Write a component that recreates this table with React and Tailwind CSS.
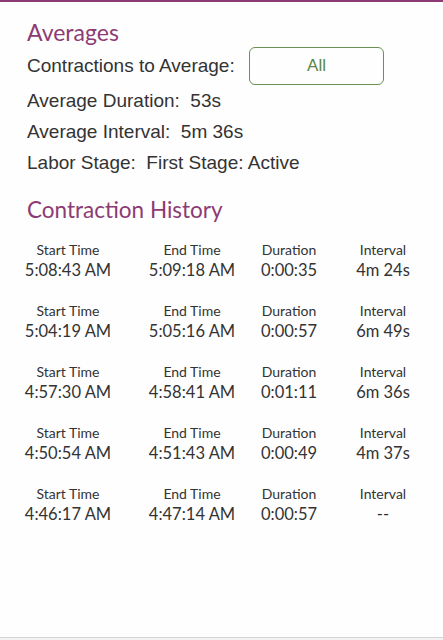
import React from "react";

const purple = "text-[#8d3b74]";

const history = [
  { start: "5:08:43 AM", end: "5:09:18 AM", duration: "0:00:35", interval: "4m 24s" },
  { start: "5:04:19 AM", end: "5:05:16 AM", duration: "0:00:57", interval: "6m 49s" },
  { start: "4:57:30 AM", end: "4:58:41 AM", duration: "0:01:11", interval: "6m 36s" },
  { start: "4:50:54 AM", end: "4:51:43 AM", duration: "0:00:49", interval: "4m 37s" },
  { start: "4:46:17 AM", end: "4:47:14 AM", duration: "0:00:57", interval: "--" },
];

const Cell = ({ label, value }) => (
  <div className="flex flex-col items-center">
    <span className="text-[14px] leading-[18px] text-[#333]">{label}</span>
    <span className="text-[16.5px] leading-[22px] text-[#333]">{value}</span>
  </div>
);

const App = () => {
  return (
    <div className="w-[443px] h-[640px] bg-[#fefefe] flex flex-col overflow-hidden">
      <div className="h-[2px] bg-[#8d3b74] shrink-0" />

      <div className="flex-1 pt-[17px]">
        {/* Averages */}
        <div className="px-[27px] font-['Liberation_Sans',Arial,sans-serif] text-[#333]">
          <h2 className={`font-['Lato',sans-serif] text-[23px] leading-[26px] ${purple}`}>Averages</h2>
          <div className="flex items-center mt-[2px] h-[38px]">
            <span className="text-[19px] w-[222px] whitespace-nowrap">Contractions to Average:</span>
            <button className="w-[135px] h-[38px] rounded-[6px] border border-[#6a8f52] text-[#5c8746] text-[17px]">
              All
            </button>
          </div>
          <div className="text-[19px] leading-[31px]">
            <p>Average Duration:&nbsp; 53s</p>
            <p>Average Interval:&nbsp; 5m 36s</p>
            <p>Labor Stage:&nbsp; First Stage: Active</p>
          </div>
        </div>

        {/* Contraction History */}
        <div className="font-['Lato',sans-serif]">
          <h2 className={`px-[27px] mt-[19px] text-[22.5px] leading-[26px] ${purple}`}>Contraction History</h2>
          <div className="mt-[18px] flex flex-col gap-[21px]">
            {history.map((row, idx) => (
              <div key={idx} className="grid grid-cols-[136px_112px_82px_106px]">
                <Cell label="Start Time" value={row.start} />
                <Cell label="End Time" value={row.end} />
                <Cell label="Duration" value={row.duration} />
                <Cell label="Interval" value={row.interval} />
              </div>
            ))}
          </div>
        </div>
      </div>

      <div className="h-[3px] shrink-0 border-t border-[#d4d4d4] bg-[#f3f3f3]" />
    </div>
  );
};

export default App;
